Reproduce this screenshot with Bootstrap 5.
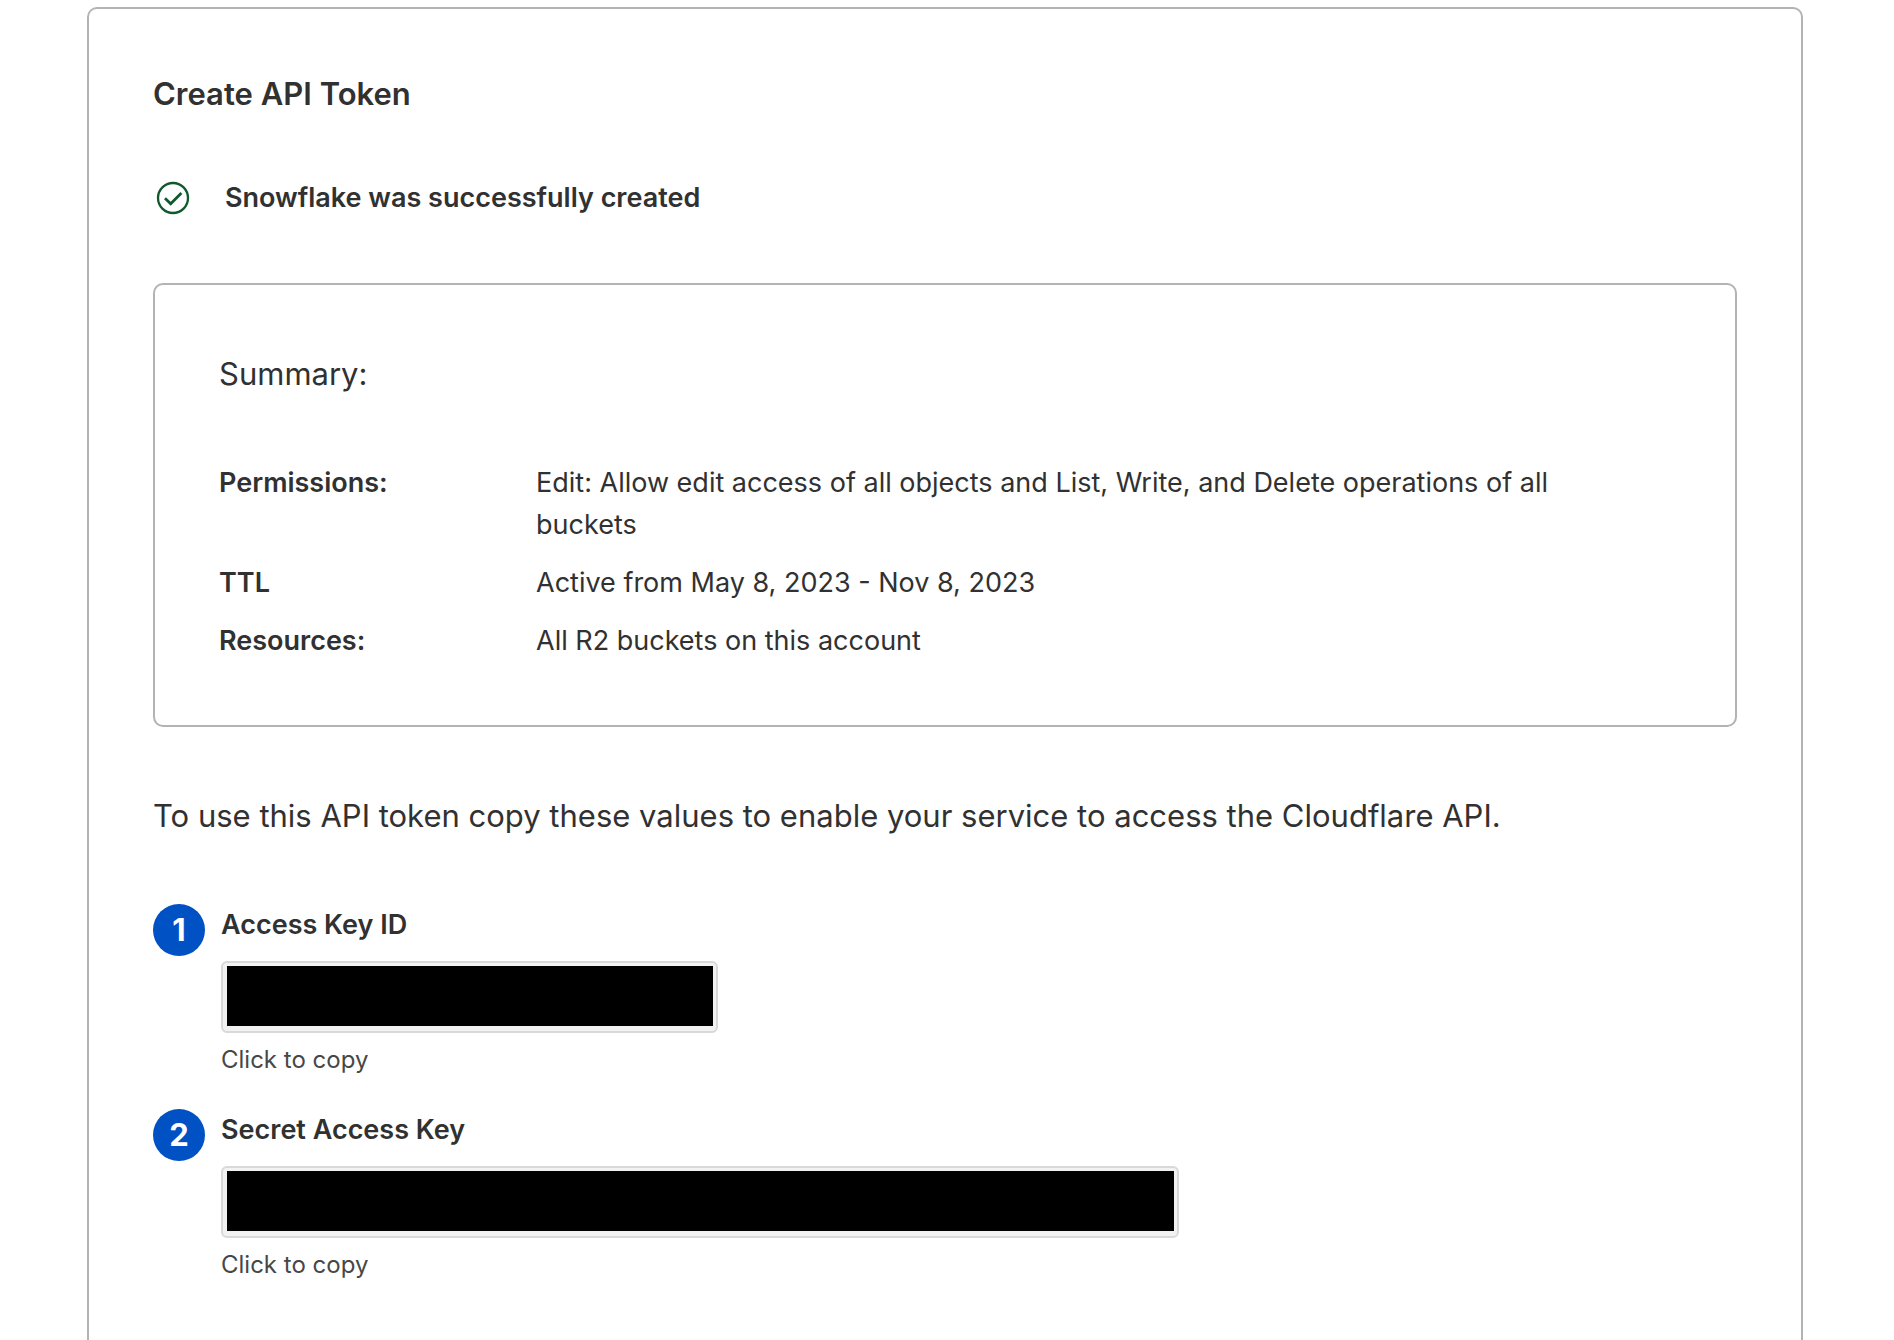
<!DOCTYPE html>
<html lang="en">
<head>
<meta charset="utf-8">
<meta name="viewport" content="width=device-width, initial-scale=1">
<title>Create API Token</title>
<link href="https://cdn.jsdelivr.net/npm/bootstrap@5.3.0/dist/css/bootstrap.min.css" rel="stylesheet">
<style>
  body { font-family: Inter, "Liberation Sans", sans-serif; font-size: 27px; line-height: 42px; color: #313131; background: #fff; }
  .page-shell { padding: 7px 91px 0 87px; }
  .token-panel, .summary-panel { border: 2px solid #b3b3b3; border-radius: 10px; }
  .token-panel { padding: 64px; border-bottom: 0; border-bottom-left-radius: 0; border-bottom-right-radius: 0; }
  .summary-panel { padding: 65px 64px 63px; margin-bottom: 65px; }
  .panel-title { font-size: 31px; line-height: 42px; font-weight: 600; margin-bottom: 62px; }
  .success-note { gap: 34px; padding-left: 2px; margin-bottom: 64px; font-weight: 600; }
  .success-note svg { width: 36px; height: 36px; }
  .panel-text { font-size: 31px; line-height: 48px; font-weight: 400; margin-bottom: 64px; }
  .summary-list { gap: 16px; }
  .summary-list dt { flex: 0 0 317px; font-weight: 600; }
  .summary-list dd { width: 75%; }
  .step-item { gap: 16px; margin-bottom: 31px; }
  .step-number { width: 52px; height: 52px; background: #0051c3; color: #fff; font-size: 31px; font-weight: 700; }
  .step-label { font-weight: 600; margin-bottom: 15px; }
  .key-field { height: 72px; max-width: 100%; padding: 3px 3px 5px 4px; border: 2px solid #d9d9d9; border-radius: 6px; background: #f2f2f2; }
  .key-field input { background: #000; color: #000; }
  .key-short { width: 497px; }
  .key-long { width: 958px; }
  .copy-link { font-size: 24px; line-height: 36px; color: #474747; margin-top: 9px; }
</style>
<script src="https://cdn.jsdelivr.net/npm/bootstrap@5.3.0/dist/js/bootstrap.bundle.min.js"></script>
</head>
<body>
<div class="page-shell d-flex flex-column min-vh-100">
  <main class="token-panel flex-grow-1">
    <h1 class="panel-title">Create API Token</h1>
    <div class="success-note d-flex align-items-center" role="status">
      <svg viewBox="0 0 36 36" fill="none" stroke="#0f5a2c" stroke-width="2.3" aria-hidden="true">
        <circle cx="18" cy="18" r="15"/>
        <path d="M10 18.200l5.700 5.600L26.400 13" stroke-width="2.8"/>
      </svg>
      <span>Snowflake was successfully created</span>
    </div>

    <section class="summary-panel">
      <h2 class="panel-text">Summary:</h2>
      <dl class="summary-list d-flex flex-column mb-0">
        <div class="d-flex"><dt>Permissions:</dt><dd class="mb-0">Edit: Allow edit access of all objects and List, Write, and Delete operations of all buckets</dd></div>
        <div class="d-flex"><dt>TTL</dt><dd class="mb-0">Active from May 8, 2023 - Nov 8, 2023</dd></div>
        <div class="d-flex"><dt>Resources:</dt><dd class="mb-0">All R2 buckets on this account</dd></div>
      </dl>
    </section>

    <p class="panel-text">To use this API token copy these values to enable your service to access the Cloudflare API.</p>

    <div class="step-item d-flex align-items-start">
      <span class="step-number rounded-circle d-flex align-items-center justify-content-center flex-shrink-0">1</span>
      <div class="flex-grow-1">
        <label class="step-label d-block" for="access-key">Access Key ID</label>
        <div class="key-field key-short"><input id="access-key" class="d-block w-100 h-100 border-0 p-0" type="text" readonly></div>
        <button type="button" class="copy-link btn btn-link d-block border-0 p-0 text-decoration-none">Click to copy</button>
      </div>
    </div>
    <div class="step-item d-flex align-items-start">
      <span class="step-number rounded-circle d-flex align-items-center justify-content-center flex-shrink-0">2</span>
      <div class="flex-grow-1">
        <label class="step-label d-block" for="secret-key">Secret Access Key</label>
        <div class="key-field key-long"><input id="secret-key" class="d-block w-100 h-100 border-0 p-0" type="text" readonly></div>
        <button type="button" class="copy-link btn btn-link d-block border-0 p-0 text-decoration-none">Click to copy</button>
      </div>
    </div>
  </main>
</div>
</body>
</html>
